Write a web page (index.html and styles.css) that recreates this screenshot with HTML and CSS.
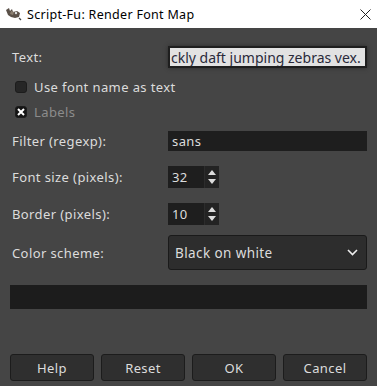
FILE: index.html
```html
<!DOCTYPE html>
<html lang="en">
<head>
    <meta charset="UTF-8">
    <title>Script-Fu: Render Font Map</title>
    <link rel="stylesheet" href="styles.css">
</head>
<body>
    <div class="titlebar">
        <svg class="app-icon" width="18" height="14" viewBox="0 0 18 14">
            <path d="M1 3 L4 1 L5 4 L7 2 L8 5 L12 4 L15 6 L14 10 L10 11 L6 10 L3 8 Z" fill="#5a5048"/>
            <path d="M6 4 L9 5 L8 8 L5 7 Z" fill="#8a7e70"/>
            <circle cx="11" cy="6" r="1.2" fill="#ddd"/>
            <path d="M14 11 L16 13" stroke="#444" stroke-width="1.2"/>
        </svg>
        <span class="title">Script-Fu: Render Font Map</span>
        <svg class="close" width="11" height="11" viewBox="0 0 11 11">
            <path d="M0.5 0.5 L10.5 10.5 M10.5 0.5 L0.5 10.5" stroke="#222" stroke-width="1"/>
        </svg>
    </div>

    <div class="content">
        <div class="row row-text">
            <label class="label">Text:</label>
            <div class="entry entry-light"><span>ckly daft jumping zebras vex.</span></div>
        </div>

        <div class="check row-check1">
            <span class="box"></span>
            <span>Use font name as text</span>
        </div>

        <div class="check check-off row-check2">
            <span class="box box-x">
                <svg width="8" height="8" viewBox="0 0 8 8"><path d="M1 1 L7 7 M7 1 L1 7" stroke="#fff" stroke-width="2"/></svg>
            </span>
            <span>Labels</span>
        </div>

        <div class="row row-filter">
            <label class="label">Filter (regexp):</label>
            <div class="entry entry-dark">sans</div>
        </div>

        <div class="row row-spin">
            <label class="label">Font size (pixels):</label>
            <div class="spin">
                <span class="spin-value">32</span>
                <span class="spin-arrows">
                    <svg width="8" height="5" viewBox="0 0 8 5"><path d="M0 5 L4 0 L8 5 Z" fill="#ddd"/></svg>
                    <svg width="8" height="5" viewBox="0 0 8 5"><path d="M0 0 L4 5 L8 0 Z" fill="#ddd"/></svg>
                </span>
            </div>
        </div>

        <div class="row row-spin2">
            <label class="label">Border (pixels):</label>
            <div class="spin">
                <span class="spin-value">10</span>
                <span class="spin-arrows">
                    <svg width="8" height="5" viewBox="0 0 8 5"><path d="M0 5 L4 0 L8 5 Z" fill="#ddd"/></svg>
                    <svg width="8" height="5" viewBox="0 0 8 5"><path d="M0 0 L4 5 L8 0 Z" fill="#ddd"/></svg>
                </span>
            </div>
        </div>

        <div class="row row-combo">
            <label class="label">Color scheme:</label>
            <div class="combo">
                <span>Black on white</span>
                <svg width="11" height="7" viewBox="0 0 11 7"><path d="M1 1 L5.5 5.5 L10 1" stroke="#eee" stroke-width="1.6" fill="none"/></svg>
            </div>
        </div>

        <div class="progress"></div>

        <div class="buttons">
            <button type="button" class="btn btn-help">Help</button>
            <button type="button" class="btn btn-reset">Reset</button>
            <button type="button" class="btn btn-ok">OK</button>
            <button type="button" class="btn btn-cancel">Cancel</button>
        </div>
    </div>
</body>
</html>
```

FILE: styles.css
```css
body {
    margin: 0;
    width: 377px;
    height: 386px;
    overflow: hidden;
    background-color: #454545;
    font-family: "Noto Sans", "Open Sans", sans-serif;
    font-size: 13px;
    letter-spacing: 0.4px;
    color: #dcdcdc;
}

.titlebar {
    height: 28px;
    background-color: #ffffff;
    display: flex;
    align-items: center;
    color: #000;
    letter-spacing: 0.3px;
}

.app-icon {
    margin-left: 5px;
    margin-right: 4px;
}

.title {
    font-size: 12.5px;
    flex: 1;
}

.close {
    margin-right: 6px;
}

.content {
    display: flex;
    flex-direction: column;
    padding: 0 10px;
}

.row {
    display: flex;
    align-items: center;
}

.label {
    width: 156px;
    padding-left: 2px;
}

.row-text {
    margin-top: 20px;
    height: 18px;
}

.entry {
    box-sizing: border-box;
    height: 100%;
    display: flex;
    align-items: center;
}

.entry-light {
    margin-left: 2px;
    width: 195px;
    background-color: #e2e2e2;
    color: #2a2a3a;
    overflow: hidden;
    white-space: nowrap;
    box-shadow: 0 0 0 2px #1e1e1e, 0 0 4px 2px #2a2a2a;
    padding-left: 1px;
    font-size: 14px;
    letter-spacing: 0;
}

.check {
    display: flex;
    align-items: center;
    gap: 7px;
    height: 13px;
    padding-left: 5px;
}

.row-check1 {
    margin-top: 14px;
}

.row-check2 {
    margin-top: 12px;
}

.check-off {
    color: #8c8c8c;
}

.box {
    box-sizing: border-box;
    width: 12px;
    height: 12px;
    border-radius: 3px;
    background-color: #262626;
    border: 1px solid #1c1c1c;
    display: flex;
    align-items: center;
    justify-content: center;
}

.box-x {
    background-color: #141414;
}

.row-filter {
    margin-top: 13px;
    height: 20px;
}

.entry-dark {
    width: 199px;
    background-color: #1e1e1e;
    padding-left: 4px;
}

.row-spin {
    margin-top: 15px;
    height: 22px;
}

.row-spin2 {
    margin-top: 15px;
    height: 22px;
}

.spin {
    width: 51px;
    height: 100%;
    display: flex;
    background-color: #1e1e1e;
}

.spin-value {
    flex: 1;
    padding-left: 4px;
    display: flex;
    align-items: center;
}

.spin-arrows {
    width: 14px;
    background-color: #232323;
    border-left: 1px solid #2c2c2c;
    display: flex;
    flex-direction: column;
    align-items: center;
    justify-content: center;
    gap: 4px;
}

.row-combo {
    margin-top: 10px;
    height: 35px;
}

.combo {
    box-sizing: border-box;
    width: 199px;
    height: 100%;
    background-color: #2d2d2d;
    border: 1px solid #1a1a1a;
    border-radius: 3px;
    display: flex;
    align-items: center;
    justify-content: space-between;
    padding: 0 8px 0 6px;
    font-size: 13.5px;
}

.progress {
    margin-top: 15px;
    height: 24px;
    background-color: #1c1c1c;
}

.buttons {
    margin-top: 45px;
    display: flex;
    gap: 7px;
}

.btn {
    box-sizing: border-box;
    flex: 1;
    height: 27px;
    background-color: #2f2f2f;
    border: 1px solid #1c1c1c;
    border-radius: 3px;
    color: #dcdcdc;
    font-family: "Noto Sans", "Open Sans", sans-serif;
    font-size: 13px;
    letter-spacing: 0.4px;
    padding: 0;
}
```
